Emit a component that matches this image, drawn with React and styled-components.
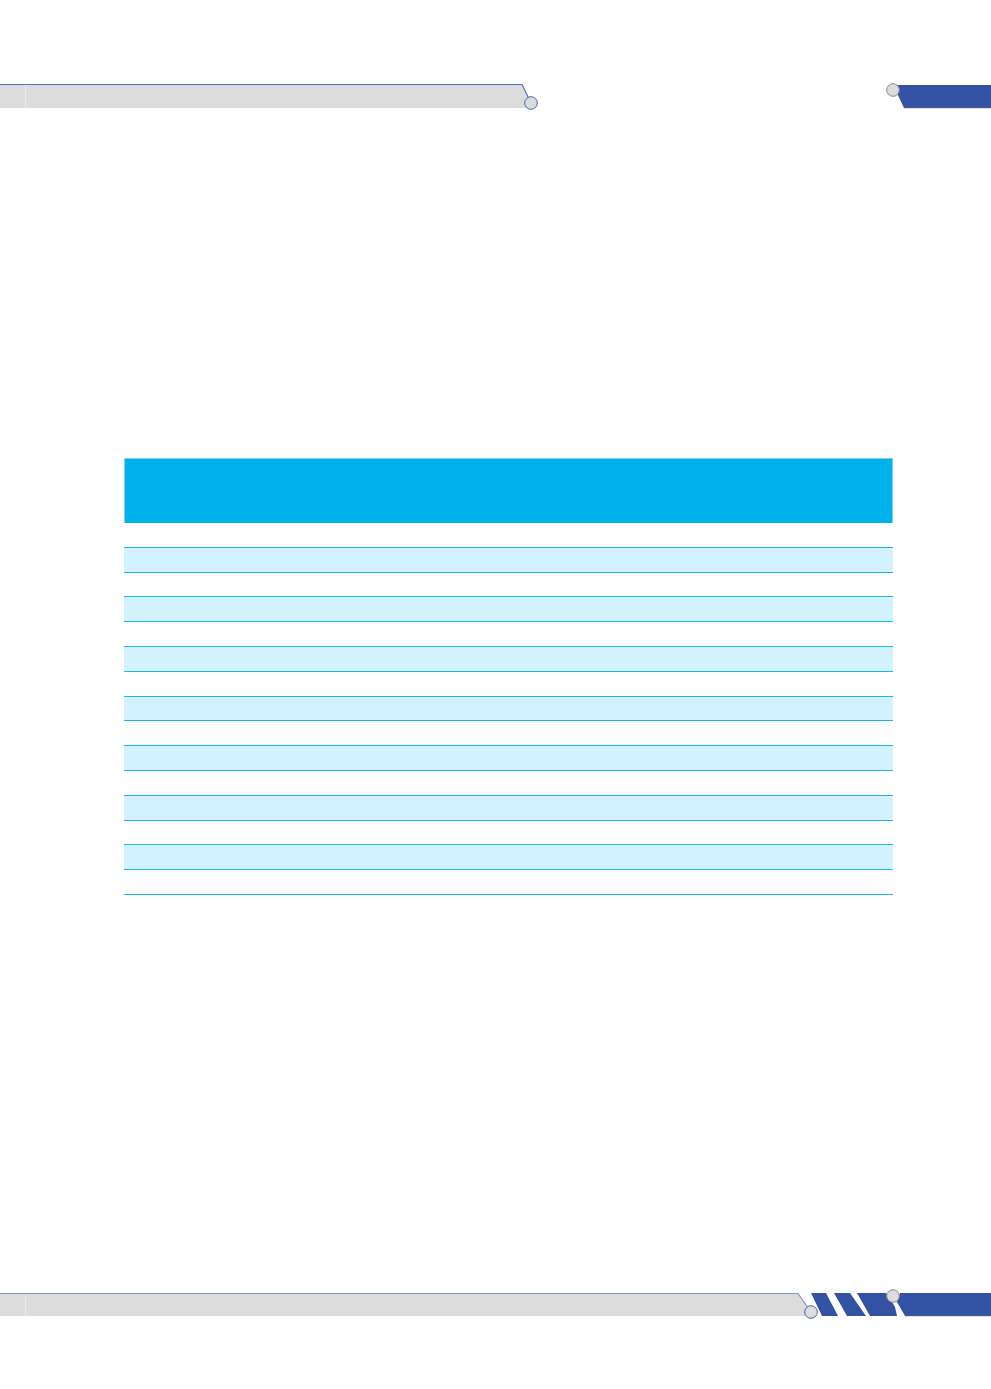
import React from 'react';
import styled, { createGlobalStyle } from 'styled-components';

const GlobalStyle = createGlobalStyle`
  html, body {
    margin: 0;
    padding: 0;
    background: #ffffff;
    font-family: "Liberation Sans", Arial, sans-serif;
  }
`;

const Page = styled.div`
  width: 991px;
  height: 1389px;
  display: flex;
  flex-direction: column;
  padding-top: 78px;
  box-sizing: border-box;
  overflow: hidden;
`;

const Band = styled.svg`
  display: block;
  width: 991px;
  height: 34px;
  flex-shrink: 0;
`;

const Table = styled.div`
  margin: 346px 0 0 124px;
  width: 769px;
  display: flex;
  flex-direction: column;
`;

const HeaderRow = styled.div`
  height: 65px;
  box-sizing: border-box;
  background: #00b1ec;
  border: 1px solid #7dd3f1;
  border-bottom: none;
  display: grid;
  grid-template-columns: 2fr 1fr 1fr 1fr;
`;

const Row = styled.div`
  height: 24.8px;
  box-sizing: border-box;
  background: ${(p) => (p.$shade ? '#d1f2fe' : '#ffffff')};
  border-bottom: 1px solid #1ab7ed;
  display: grid;
  grid-template-columns: 2fr 1fr 1fr 1fr;
`;

const Cell = styled.div`
  font-size: 12px;
  color: #222;
`;

const BottomBand = styled(Band)`
  margin-top: auto;
  margin-bottom: 69px;
`;

const TopDecor = () => (
  <Band viewBox="0 0 991 34">
    <polygon points="0,6 522,6 531,25 527,30 0,30" fill="#dcdcdc" />
    <line x1="25.5" y1="7" x2="25.5" y2="30" stroke="#e9e9e9" strokeWidth="1" />
    <polyline points="0,6.5 522,6.5 531,25" fill="none" stroke="#5470c0" strokeWidth="1.2" />
    <circle cx="531" cy="25" r="6.3" fill="#dcdcdc" stroke="#4a62b8" strokeWidth="1" />
    <polygon points="897,7 991,7 991,30 904,30 896,13" fill="#3452a4" />
    <line x1="904" y1="30" x2="991" y2="30" stroke="#7a7a7a" strokeWidth="0.8" opacity="0.6" />
    <circle cx="893" cy="12" r="6.3" fill="#dcdcdc" stroke="#8a8a8a" strokeWidth="1" />
  </Band>
);

const BottomDecor = () => (
  <BottomBand viewBox="0 0 991 34">
    <polygon points="0,7 798,7 811,26 807,30 0,30" fill="#dcdcdc" />
    <line x1="25.5" y1="8" x2="25.5" y2="30" stroke="#e9e9e9" strokeWidth="1" />
    <polyline points="0,7.5 798,7.5 811,26" fill="none" stroke="#8294c8" strokeWidth="1.2" />
    <circle cx="811" cy="26" r="6.3" fill="#dcdcdc" stroke="#4a62b8" strokeWidth="1" />
    <polygon points="811,7 826,7 838,30 822,30" fill="#3452a4" />
    <polygon points="834,7 850,7 866,30 847,30" fill="#3452a4" />
    <polygon points="857,7 886,7 895,21 897,30 870,30" fill="#3452a4" />
    <polygon points="900,7 991,7 991,30 905,30 897,16" fill="#3452a4" />
    <line x1="905" y1="30" x2="991" y2="30" stroke="#7a7a7a" strokeWidth="0.8" opacity="0.6" />
    <circle cx="893" cy="10" r="6.3" fill="#dcdcdc" stroke="#8a8a8a" strokeWidth="1" />
  </BottomBand>
);

const rows = Array.from({ length: 15 }, (_, i) => i);

export default function App() {
  return (
    <>
      <GlobalStyle />
      <Page>
        <TopDecor />
        <Table>
          <HeaderRow>
            <Cell />
            <Cell />
            <Cell />
            <Cell />
          </HeaderRow>
          {rows.map((i) => (
            <Row key={i} $shade={i % 2 === 1}>
              <Cell />
              <Cell />
              <Cell />
              <Cell />
            </Row>
          ))}
        </Table>
        <BottomDecor />
      </Page>
    </>
  );
}
